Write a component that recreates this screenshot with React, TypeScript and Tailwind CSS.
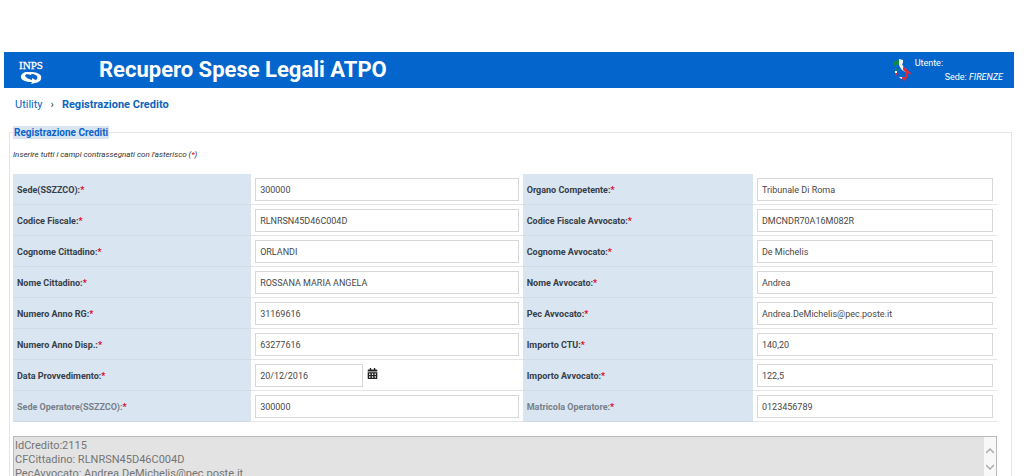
import React from 'react';
import { FaCalendarAlt } from 'react-icons/fa';

type Field = {
  id: string;
  label: string;
  value: string;
  muted?: boolean;
  date?: boolean;
};

const rows: [Field, Field][] = [
  [
    { id: 'sede', label: 'Sede(SSZZCO):', value: '300000' },
    { id: 'organo', label: 'Organo Competente:', value: 'Tribunale Di Roma' },
  ],
  [
    { id: 'cf', label: 'Codice Fiscale:', value: 'RLNRSN45D46C004D' },
    { id: 'cfAvvocato', label: 'Codice Fiscale Avvocato:', value: 'DMCNDR70A16M082R' },
  ],
  [
    { id: 'cognome', label: 'Cognome Cittadino:', value: 'ORLANDI' },
    { id: 'cognomeAvvocato', label: 'Cognome Avvocato:', value: 'De Michelis' },
  ],
  [
    { id: 'nome', label: 'Nome Cittadino:', value: 'ROSSANA MARIA ANGELA' },
    { id: 'nomeAvvocato', label: 'Nome Avvocato:', value: 'Andrea' },
  ],
  [
    { id: 'annoRg', label: 'Numero Anno RG:', value: '31169616' },
    { id: 'pec', label: 'Pec Avvocato:', value: 'Andrea.DeMichelis@pec.poste.it' },
  ],
  [
    { id: 'annoDisp', label: 'Numero Anno Disp.:', value: '63277616' },
    { id: 'importoCtu', label: 'Importo CTU:', value: '140,20' },
  ],
  [
    { id: 'data', label: 'Data Provvedimento:', value: '20/12/2016', date: true },
    { id: 'importoAvvocato', label: 'Importo Avvocato:', value: '122,5' },
  ],
  [
    { id: 'sedeOperatore', label: 'Sede Operatore(SSZZCO):', value: '300000', muted: true },
    { id: 'matricola', label: 'Matricola Operatore:', value: '0123456789', muted: true },
  ],
];

const esito = `IdCredito:2115
CFCittadino: RLNRSN45D46C004D
PecAvvocato: Andrea.DeMichelis@pec.poste.it`;

const InpsLogo: React.FC = () => (
  <svg width="24" height="30" viewBox="0 0 24 30" fill="#fff" role="img" aria-label="INPS">
    <text x="12" y="14" textAnchor="middle" fontSize="11" fontFamily="'Liberation Serif', serif" stroke="#fff" strokeWidth="0.3">
      INPS
    </text>
    {/* two interlocking crescents */}
    <path d="M2 21C3 17 8 16 13 18L12 20C9 19 6 19 6 21C7 23 10 24 13 25L13 23L20 27L12 29L13 27C7 27 1 25 2 21Z" />
    <path d="M5 18C11 16 20 17 22 21C23 24 21 27 18 27L16 25C18 25 19 23 18 21C16 19 11 18 5 18Z" />
  </svg>
);

const Italy: React.FC = () => (
  <svg width="18" height="22" viewBox="0 0 18 22" aria-hidden="true">
    <path fill="#168a3c" d="M0 5L1 3L3 2L5 1L7 0V6L5 6L4 5L2 7L1 7Z" />
    <path fill="#f4f7f6" d="M6 0L10 1L10 4L9 5L11 9L14 12L12 13L9 11L7 8L6 6Z" />
    <path fill="#e3293c" d="M10 8L13 9L14 11L18 14L17 16L15 14L14 15L15 17L13 20L12 19L13 17L12 13L10 11Z" />
    <path fill="#168a3c" d="M2 10L4 9L4 11L3 12L2 11Z" />
    <path fill="#f4f7f6" d="M2 12L4 12L4 14L2 14Z" />
    <path fill="#e3293c" d="M2 14L4 14L4 16L2 17Z" />
    <path fill="#f4f7f6" d="M6 18L9 18L9 20L7 19Z" />
    <path fill="#e3293c" d="M9 18L13 18L12 22L9 20Z" />
  </svg>
);

const FieldCells: React.FC<{ field: Field }> = ({ field }) => (
  <>
    <th scope="row" className="border-b border-[#d0dbe4] bg-[#d9e5f0] p-0 pt-px pl-1 text-left font-bold">
      <label htmlFor={field.id} className={field.muted ? 'text-[#77808a]' : 'text-[#36404a]'}>
        {field.label}
        <span className="text-[#e0001b]">*</span>
      </label>
    </th>
    <td className="border-b border-[#e3e5e7] px-1 pt-1 pb-[3px]">
      <div className="flex items-center gap-1">
        <input
          id={field.id}
          type="text"
          defaultValue={field.value}
          className={`h-[23px] min-w-0 border border-[#d5d8da] bg-white px-1 text-[#484848] ${field.date ? 'w-[108px]' : 'w-full'}`}
        />
        {field.date && (
          <button type="button" aria-label="Apri calendario" className="mb-1 text-[11px] text-[#222]">
            <FaCalendarAlt />
          </button>
        )}
      </div>
    </td>
  </>
);

const Header: React.FC = () => (
  <header className="mr-[10px] ml-1 flex h-9 items-center bg-[#0466cc] text-white">
    <div className="w-[95px] pl-[15px]">
      <InpsLogo />
    </div>
    <h1 className="flex-1 text-[22px] leading-8 font-bold">Recupero Spese Legali ATPO</h1>
    <div className="flex items-center pr-[11px]">
      <Italy />
      <div className="ml-1 text-[9px] leading-[14px]">
        <div>Utente:</div>
        <div className="pl-[30px]">
          Sede: <em>FIRENZE</em>
        </div>
      </div>
    </div>
  </header>
);

const App: React.FC = () => {
  return (
    <div className="h-screen overflow-hidden bg-white pt-[52px] font-['Roboto','Liberation_Sans',sans-serif] text-[9px] leading-[14px] text-[#333]">
      <Header />

      {/* Breadcrumb */}
      <nav className="flex items-center px-[15px] pt-[9px] text-[11px] leading-4 text-[#0b64bd]">
        <a href="#utility">Utility</a>
        <span className="px-2 text-[#333]">›</span>
        <a href="#registrazione" className="font-bold">Registrazione Credito</a>
      </nav>

      <main className="mr-[12px] ml-[9px] pt-[13px]">
        <fieldset className="border border-[#e3e5e7] pr-[14px] pb-3 pl-[3px]">
          <legend className="bg-[#d9e5f0] px-px text-[10px] leading-[13px] font-bold text-[#0b64cc]">
            Registrazione Crediti
          </legend>

          <p className="pt-[9px] pb-3 text-[8px] italic">
            Inserire tutti i campi contrassegnati con l'asterisco (<span className="text-[#e0001b]">*</span>)
          </p>

          <table className="w-full table-fixed border-separate border-spacing-0">
            <colgroup>
              <col className="w-[24.2%]" />
              <col className="w-[27.6%]" />
              <col className="w-[23.4%]" />
              <col className="w-[24.8%]" />
            </colgroup>
            <tbody>
              {rows.map(([left, right]) => (
                <tr key={left.id}>
                  <FieldCells field={left} />
                  <FieldCells field={right} />
                </tr>
              ))}
            </tbody>
          </table>

          {/* Esito */}
          <div className="mt-[14px] flex border border-[#b9b9b9] bg-[#e3e3e3]">
            <textarea
              aria-label="Esito registrazione"
              readOnly
              rows={3}
              defaultValue={esito}
              className="block flex-1 resize-none overflow-hidden px-px pt-[2px] text-[11px] leading-[14px] text-[#757575]"
            />
            <div className="flex w-3 flex-col items-center gap-2 bg-[#f8f8f8] pt-[10px] text-[#aaa]">
              <button type="button" aria-label="Scorri su">
                <svg width="8" height="8" viewBox="0 0 8 8" fill="none" stroke="currentColor" strokeWidth="1.5">
                  <path d="M0 6L4 2L8 6" />
                </svg>
              </button>
              <button type="button" aria-label="Scorri giù">
                <svg width="8" height="8" viewBox="0 0 8 8" fill="none" stroke="currentColor" strokeWidth="1.5">
                  <path d="M0 2L4 6L8 2" />
                </svg>
              </button>
            </div>
          </div>
        </fieldset>
      </main>
    </div>
  );
};

export default App;
